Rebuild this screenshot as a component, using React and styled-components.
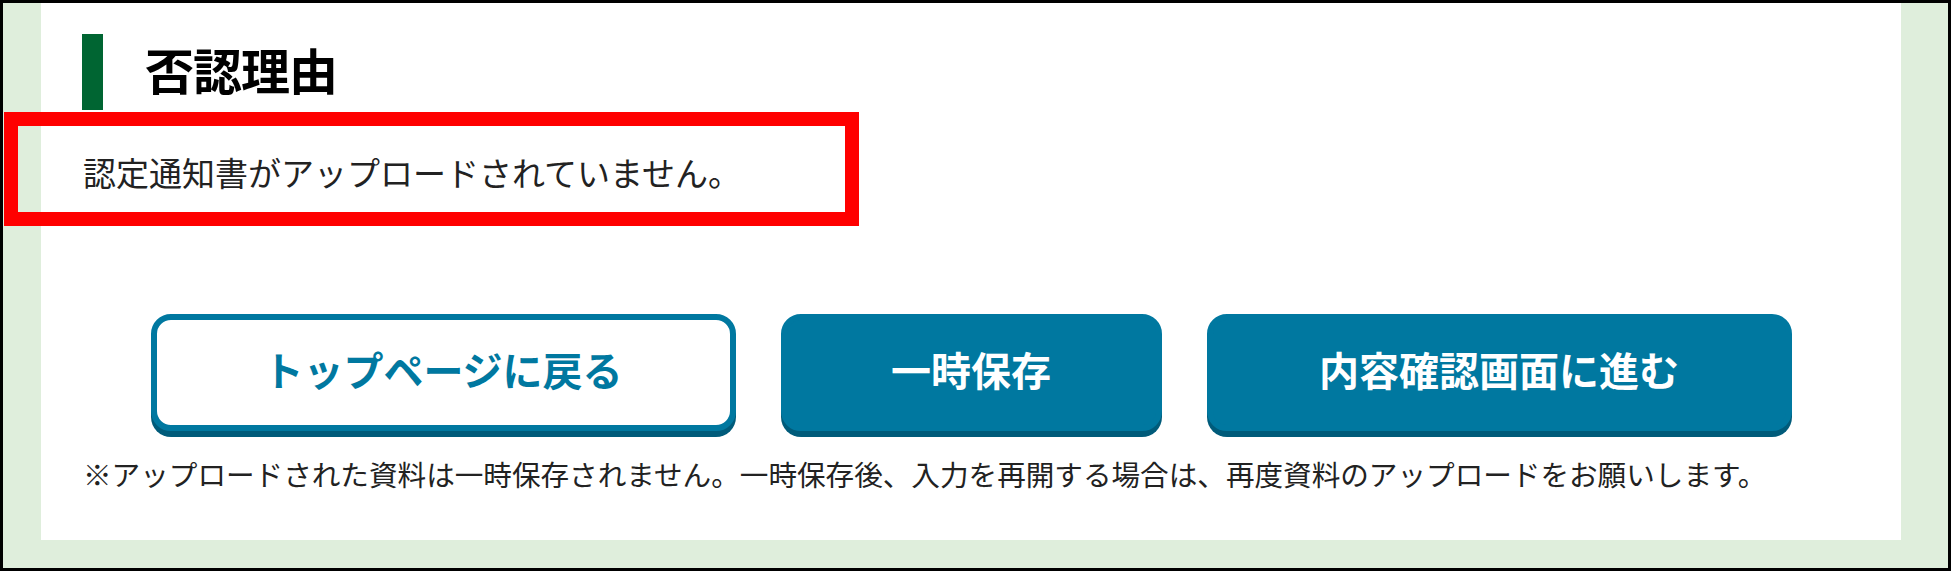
import React from "react";
import styled, { createGlobalStyle } from "styled-components";

const GlobalStyle = createGlobalStyle`
    html, body {
        margin: 0;
        padding: 0;
        background: #ffffff;
    }
    body {
        font-family: "Noto Sans CJK JP", "Noto Sans", sans-serif;
        color: #222222;
    }
`;

export default function App() {
    return (
        <>
            <GlobalStyle />
            <Frame>
                <Panel>
                    <Heading>
                        <HeadingBar />
                        <HeadingText>否認理由</HeadingText>
                    </Heading>
                    <Reason>認定通知書がアップロードされていません。</Reason>
                    <ButtonRow>
                        <ActionButton $outline $width={585}>トップページに戻る</ActionButton>
                        <ActionButton $width={381}>一時保存</ActionButton>
                        <ActionButton $width={585}>内容確認画面に進む</ActionButton>
                    </ButtonRow>
                    <Note>
                        ※アップロードされた資料は一時保存されません。一時保存後、入力を再開する場合は、再度資料のアップロードをお願いします。
                    </Note>
                </Panel>
                <Highlight />
            </Frame>
        </>
    );
}

const Frame = styled.div`
    position: relative;
    box-sizing: border-box;
    width: 1951px;
    height: 571px;
    border: 3px solid #000000;
    background: #dfeedc;
    padding: 0 47px 28px 38px;
`;

const Panel = styled.div`
    background: #ffffff;
    height: 100%;
    padding-top: 31px;
    box-sizing: border-box;
`;

const Heading = styled.div`
    display: flex;
    align-items: center;
    gap: 42px;
    height: 76px;
    padding-left: 41px;
`;

const HeadingBar = styled.span`
    display: block;
    width: 21px;
    height: 76px;
    background: #006532;
`;

const HeadingText = styled.h2`
    margin: 0 0 8px;
    font-size: 49px;
    line-height: 1;
    font-weight: 700;
    color: #000000;
    letter-spacing: -1px;
`;

const Reason = styled.p`
    margin: 46px 0 0;
    padding-left: 42px;
    font-size: 33px;
    line-height: 32px;
    color: #222222;
`;

const ButtonRow = styled.div`
    display: flex;
    justify-content: center;
    gap: 45px;
    margin-top: 126px;
`;

const ActionButton = styled.button`
    box-sizing: border-box;
    width: ${(p) => p.$width}px;
    height: 117px;
    border: 6px solid #0078a0;
    border-radius: 20px;
    background: ${(p) => (p.$outline ? "#ffffff" : "#0078a0")};
    color: ${(p) => (p.$outline ? "#0078a0" : "#ffffff")};
    box-shadow: 0 6px 0 #005b7a;
    font-family: "Noto Sans CJK JP", sans-serif;
    font-size: 40px;
    font-weight: 700;
    line-height: 1;
    padding: 0 0 8px;
    cursor: pointer;
`;

const Note = styled.p`
    margin: 28px 0 0;
    padding-left: 42px;
    font-size: 28.6px;
    line-height: 29px;
    color: #222222;
    white-space: nowrap;
`;

const Highlight = styled.div`
    position: absolute;
    left: 1px;
    top: 109px;
    width: 855px;
    height: 114px;
    box-sizing: border-box;
    border: 14px solid #ff0000;
    pointer-events: none;
`;
